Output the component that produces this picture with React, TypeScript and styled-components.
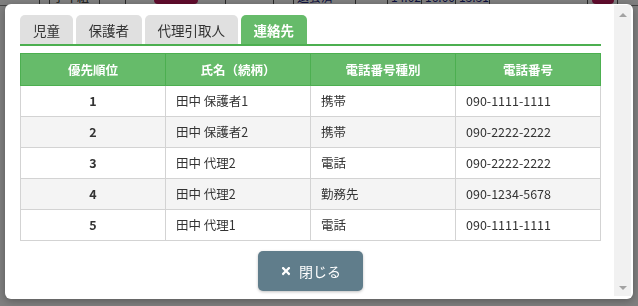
import React, { useState } from "react";
import styled, { createGlobalStyle } from "styled-components";
import { FaTimes } from "react-icons/fa";

const Global = createGlobalStyle`
  html, body { margin: 0; padding: 0; }
  body {
    font-family: "Noto Sans CJK JP", "Noto Sans", sans-serif;
    color: #333;
    background: #fff;
    width: 638px;
    height: 306px;
    overflow: hidden;
  }
`;

const Page = styled.div`
  height: 306px;
  background: #fff;
`;

const BgRow = styled.div`
  display: flex;
  height: 16px;
  margin-top: -11px;
  border-bottom: 1px solid #888;
`;

const BgCell = styled.div<{ $w: number; $color?: string; $center?: boolean }>`
  width: ${(p) => p.$w}px;
  flex-shrink: 0;
  border-right: 1px solid #555;
  font-size: 12px;
  line-height: 16px;
  color: ${(p) => p.$color || "#222"};
  padding-left: 3px;
  box-sizing: border-box;
  white-space: nowrap;
  overflow: hidden;
  display: flex;
  align-items: center;
  ${(p) => (p.$center ? "justify-content:center;padding-left:0;" : "")}
`;

const Pill = styled.span<{ $w: number }>`
  display: inline-block;
  width: ${(p) => p.$w}px;
  height: 14px;
  border-radius: 4px;
  background: #c2185b;
`;

const Overlay = styled.div`
  position: fixed;
  inset: 0;
  background: rgba(0, 0, 0, 0.5);
  display: flex;
  padding: 4px 5px 7px 5px;
  box-sizing: border-box;
`;

const Modal = styled.div`
  flex: 1;
  background: #fff;
  border-radius: 6px;
  display: flex;
  overflow: hidden;
  box-shadow: 0 2px 8px rgba(0, 0, 0, 0.3);
`;

const Body = styled.div`
  flex: 1;
  display: flex;
  flex-direction: column;
  padding: 11px 13px 10px 15px;
  min-width: 0;
`;

const ScrollTrack = styled.div`
  width: 17px;
  margin: 1px 2px 3px 0;
  background: #f1f1f1;
  display: flex;
  flex-direction: column;
  justify-content: space-between;
  align-items: center;
  padding: 8px 0 6px;
  box-sizing: border-box;
`;

const Arrow = styled.div<{ $down?: boolean }>`
  width: 0;
  height: 0;
  border-left: 4px solid transparent;
  border-right: 4px solid transparent;
  ${(p) =>
    p.$down
      ? "border-top: 4px solid #a3a3a3;"
      : "border-bottom: 4px solid #a3a3a3;"}
`;

const TabBar = styled.div`
  display: flex;
  gap: 2.5px;
  border-bottom: 2px solid #4caf50;
`;

const Tab = styled.button<{ $active?: boolean }>`
  all: unset;
  height: 29px;
  padding: 0 13px;
  font-size: 13.5px;
  border-radius: 5px 5px 0 0;
  display: flex;
  align-items: center;
  cursor: pointer;
  font-family: "Noto Sans CJK JP", sans-serif;
  background: ${(p) => (p.$active ? "#66bb6a" : "#e0e0e0")};
  color: ${(p) => (p.$active ? "#fff" : "#333")};
  font-weight: ${(p) => (p.$active ? 700 : 400)};
`;

const Table = styled.table`
  margin-top: 7px;
  width: 100%;
  border-collapse: collapse;
  table-layout: fixed;
  font-size: 12.5px;
`;

const Th = styled.th`
  background: #66bb6a;
  color: #fff;
  font-weight: 700;
  height: 31px;
  padding: 0;
  border: 1px solid #4caf50;
  text-align: center;
  line-height: 16px;
`;

const Tr = styled.tr<{ $alt?: boolean }>`
  background: ${(p) => (p.$alt ? "#f4f4f4" : "#fff")};
`;

const Td = styled.td<{ $center?: boolean }>`
  height: 30px;
  padding: 0 10px;
  border: 1px solid #d3d3d3;
  line-height: 16px;
  color: #333;
  text-align: ${(p) => (p.$center ? "center" : "left")};
  font-weight: ${(p) => (p.$center ? 700 : 400)};
`;

const Footer = styled.div`
  display: flex;
  justify-content: center;
  margin-top: 10px;
`;

const CloseButton = styled.button`
  all: unset;
  width: 105px;
  height: 40px;
  box-sizing: border-box;
  background: #607d8b;
  color: #fff;
  border-radius: 5px;
  display: flex;
  align-items: center;
  justify-content: center;
  gap: 7px;
  font-size: 14px;
  font-family: "Noto Sans CJK JP", sans-serif;
  box-shadow: 0 1px 3px rgba(0, 0, 0, 0.25);
  cursor: pointer;
`;

const tabs = ["児童", "保護者", "代理引取人", "連絡先"];

const rows = [
  { order: 1, name: "田中 保護者1", type: "携帯", tel: "090-1111-1111" },
  { order: 2, name: "田中 保護者2", type: "携帯", tel: "090-2222-2222" },
  { order: 3, name: "田中 代理2", type: "電話", tel: "090-2222-2222" },
  { order: 4, name: "田中 代理2", type: "勤務先", tel: "090-1234-5678" },
  { order: 5, name: "田中 代理1", type: "電話", tel: "090-1111-1111" },
];

export default function App() {
  const [active, setActive] = useState(3);
  return (
    <>
      <Global />
      <Page>
        <BgRow>
          <BgCell $w={40} />
          <BgCell $w={10} />
          <BgCell $w={50}>学年組</BgCell>
          <BgCell $w={26} />
          <BgCell $w={100} $center>
            <Pill $w={44} />
          </BgCell>
          <BgCell $w={48} />
          <BgCell $w={20} />
          <BgCell $w={62} $color="#1a237e">退会済</BgCell>
          <BgCell $w={32} />
          <BgCell $w={34} $color="#1a237e">14:02</BgCell>
          <BgCell $w={34} $color="#1a237e">16:00</BgCell>
          <BgCell $w={34} $color="#1a237e">15:51</BgCell>
          <BgCell $w={98} />
          <BgCell $w={30} $center>
            <Pill $w={22} />
          </BgCell>
        </BgRow>
      </Page>
      <Overlay>
        <Modal>
          <Body>
            <TabBar>
              {tabs.map((t, i) => (
                <Tab key={t} $active={i === active} onClick={() => setActive(i)}>
                  {t}
                </Tab>
              ))}
            </TabBar>
            <Table>
              <thead>
                <tr>
                  <Th>優先順位</Th>
                  <Th>氏名（続柄）</Th>
                  <Th>電話番号種別</Th>
                  <Th>電話番号</Th>
                </tr>
              </thead>
              <tbody>
                {rows.map((r, i) => (
                  <Tr key={r.order} $alt={i % 2 === 1}>
                    <Td $center>{r.order}</Td>
                    <Td>{r.name}</Td>
                    <Td>{r.type}</Td>
                    <Td>{r.tel}</Td>
                  </Tr>
                ))}
              </tbody>
            </Table>
            <Footer>
              <CloseButton>
                <FaTimes size={12} />
                閉じる
              </CloseButton>
            </Footer>
          </Body>
          <ScrollTrack>
            <Arrow />
            <Arrow $down />
          </ScrollTrack>
        </Modal>
      </Overlay>
    </>
  );
}
